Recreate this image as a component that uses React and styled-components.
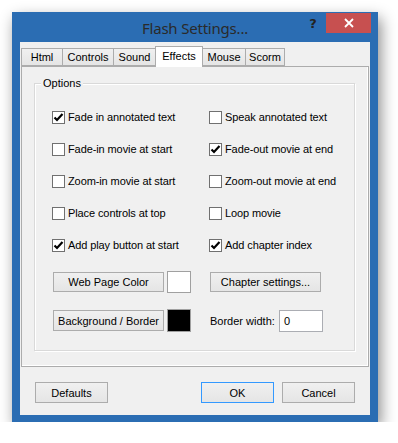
import React from "react";
import styled, { createGlobalStyle } from "styled-components";

const Global = createGlobalStyle`
  html, body { margin: 0; padding: 0; background: #ffffff; }
  body { font-family: "Liberation Sans", Arial, sans-serif; font-size: 11px; color: #000; }
  * { box-sizing: border-box; }
`;

const Window = styled.div`
  margin: 12px 0 0 12px;
  width: 366px;
  height: 410px;
  background: #2b6db3;
  padding: 0 8px 7px 8px;
  display: flex;
  flex-direction: column;
  box-shadow: 3px 6px 14px rgba(0, 0, 0, 0.45);
`;

const TitleBar = styled.div`
  height: 30px;
  display: grid;
  grid-template-columns: 1fr auto 1fr;
  align-items: start;
`;

const Title = styled.div`
  grid-column: 2;
  font-family: "Noto Sans", "Open Sans", sans-serif;
  font-size: 15px;
  color: #2a2a2a;
  line-height: 20px;
  padding-top: 6px;
  letter-spacing: -0.2px;
`;

const Caption = styled.div`
  grid-column: 3;
  justify-self: end;
  display: flex;
  margin-top: 1px;
  margin-right: -1px;
`;

const HelpBtn = styled.div`
  width: 26px;
  height: 20px;
  display: flex;
  align-items: center;
  justify-content: center;
  font-family: "DejaVu Sans", sans-serif;
  font-weight: bold;
  font-size: 13px;
  color: #222;
`;

const CloseBtn = styled.div`
  width: 45px;
  height: 20px;
  background: #c75050;
  display: flex;
  align-items: center;
  justify-content: center;
`;

const Client = styled.div`
  flex: 1;
  background: #f0f0f0;
  padding: 4px 1px 0 1px;
  display: flex;
  flex-direction: column;
`;

const TabStrip = styled.div`
  display: flex;
  align-items: flex-end;
  height: 20px;
  position: relative;
  z-index: 1;
`;

const Tab = styled.div`
  width: ${(p) => p.$w}px;
  height: ${(p) => (p.$active ? 21 : 18)}px;
  margin-left: ${(p) => (p.$first ? 0 : -1)}px;
  margin-bottom: ${(p) => (p.$active ? -1 : 0)}px;
  border: 1px solid #acacac;
  border-bottom: ${(p) => (p.$active ? "none" : "1px solid #acacac")};
  background: ${(p) => (p.$active ? "#ffffff" : "linear-gradient(#f0f0f0, #e5e5e5)")};
  position: relative;
  z-index: ${(p) => (p.$active ? 2 : 1)};
  display: flex;
  align-items: center;
  justify-content: center;
  padding-bottom: ${(p) => (p.$active ? 2 : 0)}px;
  font-size: 11px;
  color: #000;
`;

const Panel = styled.div`
  height: 301px;
  border: 1px solid #acacac;
  background: #f0f0f0;
  box-shadow: inset -1px -1px 0 #ffffff;
  padding: 16px 13px 15px 12px;
  display: flex;
`;

const Group = styled.div`
  flex: 1;
  position: relative;
  border: 1px solid #d9d9d9;
  box-shadow: 1px 1px 0 #ffffff, inset 1px 1px 0 #ffffff;
  padding: 17px 0 0 17px;
  display: grid;
  grid-template-columns: 157px 1fr;
  grid-template-rows: repeat(5, 32px) auto auto;
  align-content: start;
`;

const Legend = styled.span`
  position: absolute;
  top: -7px;
  left: 6px;
  padding: 0 2px;
  background: #f0f0f0;
  font-size: 11px;
  line-height: 13px;
`;

const CheckRow = styled.label`
  display: flex;
  align-items: center;
  gap: 3px;
  font-size: 11px;
  letter-spacing: -0.1px;
`;

const Box = styled.span`
  width: 13px;
  height: 13px;
  border: 1px solid #707070;
  background: #ffffff;
  display: inline-flex;
  align-items: center;
  justify-content: center;
  flex: none;
`;

const ControlRow = styled.div`
  display: flex;
  align-items: center;
  gap: 3px;
  padding-left: 1px;
  margin-top: ${(p) => p.$mt || 0}px;
`;

const Button = styled.div`
  width: ${(p) => p.$w}px;
  height: ${(p) => p.$h || 21}px;
  border: 1px solid ${(p) => (p.$default ? "#3399ff" : "#acacac")};
  background: linear-gradient(#f0f0f0, #e5e5e5);
  display: flex;
  align-items: center;
  justify-content: center;
  font-size: 11px;
  color: #000;
`;

const Swatch = styled.div`
  width: 24px;
  height: ${(p) => p.$h}px;
  border: 1px solid #a0a0a0;
  background: ${(p) => p.$color};
`;

const FieldLabel = styled.span`
  font-size: 11px;
  width: 66px;
`;

const Input = styled.div`
  width: 44px;
  height: 22px;
  border: 1px solid #abadb3;
  background: #ffffff;
  padding: 0 4px;
  display: flex;
  align-items: center;
  font-size: 11px;
`;

const Footer = styled.div`
  display: flex;
  align-items: center;
  padding: 15px 14px 0 14px;
  gap: 8px;
`;

const Spacer = styled.div`
  flex: 1;
`;

const Check = () => (
  <svg width="11" height="11" viewBox="0 0 11 11">
    <path d="M1.5 5.5 L4 8 L9.5 2" stroke="#000" strokeWidth="2.2" fill="none" />
  </svg>
);

const CheckBox = ({ checked, children }) => (
  <CheckRow>
    <Box>{checked && <Check />}</Box>
    <span>{children}</span>
  </CheckRow>
);

const tabs = [
  { label: "Html", w: 42 },
  { label: "Controls", w: 52 },
  { label: "Sound", w: 43 },
  { label: "Effects", w: 48, active: true },
  { label: "Mouse", w: 44 },
  { label: "Scorm", w: 40 },
];

const options = [
  ["Fade in annotated text", true, "Speak annotated text", false],
  ["Fade-in movie at start", false, "Fade-out movie at end", true],
  ["Zoom-in movie at start", false, "Zoom-out movie at end", false],
  ["Place controls at top", false, "Loop movie", false],
  ["Add play button at start", true, "Add chapter index", true],
];

export default function App() {
  return (
    <>
      <Global />
      <Window>
        <TitleBar>
          <Title>Flash Settings...</Title>
          <Caption>
            <HelpBtn>?</HelpBtn>
            <CloseBtn>
              <svg width="10" height="10" viewBox="0 0 10 10">
                <path d="M1 1 L9 9 M9 1 L1 9" stroke="#fff" strokeWidth="1.8" />
              </svg>
            </CloseBtn>
          </Caption>
        </TitleBar>
        <Client>
          <TabStrip>
            {tabs.map((t, i) => (
              <Tab key={t.label} $w={t.w} $active={t.active} $first={i === 0}>
                {t.label}
              </Tab>
            ))}
          </TabStrip>
          <Panel>
            <Group>
              <Legend>Options</Legend>
              {options.map(([a, ac, b, bc]) => (
                <React.Fragment key={a}>
                  <CheckBox checked={ac}>{a}</CheckBox>
                  <CheckBox checked={bc}>{b}</CheckBox>
                </React.Fragment>
              ))}
              <ControlRow $mt={10}>
                <Button $w={111} $h={20}>Web Page Color</Button>
                <Swatch $color="#ffffff" $h={22} />
              </ControlRow>
              <ControlRow $mt={10}>
                <Button $w={111} $h={20}>Chapter settings...</Button>
              </ControlRow>
              <ControlRow $mt={16}>
                <Button $w={111} $h={21}>Background / Border</Button>
                <Swatch $color="#000000" $h={23} />
              </ControlRow>
              <ControlRow $mt={16}>
                <FieldLabel>Border width:</FieldLabel>
                <Input>0</Input>
              </ControlRow>
            </Group>
          </Panel>
          <Footer>
            <Button $w={73}>Defaults</Button>
            <Spacer />
            <Button $w={73} $default>OK</Button>
            <Button $w={73}>Cancel</Button>
          </Footer>
        </Client>
      </Window>
    </>
  );
}
